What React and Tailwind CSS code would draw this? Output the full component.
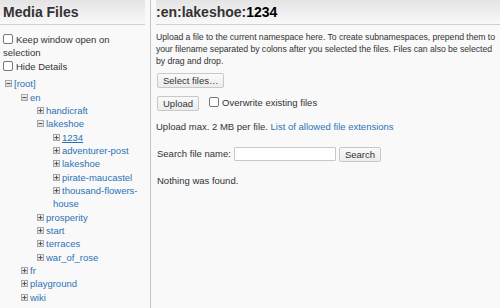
import React from 'react';

const arbol = {
  name: '[root]',
  open: true,
  children: [
    {
      name: 'en',
      open: true,
      children: [
        { name: 'handicraft' },
        {
          name: 'lakeshoe',
          open: true,
          children: [
            { name: '1234', current: true },
            { name: 'adventurer-post' },
            { name: 'lakeshoe' },
            { name: 'pirate-maucastel' },
            { name: 'thousand-flowers-house' },
          ],
        },
        { name: 'prosperity' },
        { name: 'start' },
        { name: 'terraces' },
        { name: 'war_of_rose' },
      ],
    },
    { name: 'fr' },
    { name: 'playground' },
    { name: 'wiki' },
  ],
};

const Toggle = ({ open }) => (
  <svg width="7" height="7" viewBox="0 0 7 7" className="inline-block align-middle mr-[2px] -mt-[2px]">
    <defs>
      <linearGradient id="tg" x1="0" y1="0" x2="0" y2="1">
        <stop offset="0" stopColor="#f6f6f6" />
        <stop offset="1" stopColor="#d4d4d4" />
      </linearGradient>
    </defs>
    <rect x="0.5" y="0.5" width="6" height="6" fill="url(#tg)" stroke="#a8a8a8" />
    <rect x="1.5" y="3" width="4" height="1" fill="#555" />
    {!open && <rect x="3" y="1.5" width="1" height="4" fill="#555" />}
  </svg>
);

function Nodo({ nodo }) {
  return (
    <li>
      <Toggle open={nodo.open} />
      <a className={`text-[#2b73b7] ${nodo.current ? 'underline' : ''}`}>{nodo.name}</a>
      {nodo.children && (
        <ul className="pl-[16px]">
          {nodo.children.map((n, i) => (
            <Nodo key={i} nodo={n} />
          ))}
        </ul>
      )}
    </li>
  );
}

const Casilla = () => (
  <span className="inline-block w-[10px] h-[10px] border border-[#777] rounded-[2px] bg-white align-middle -mt-[2px] mr-[3px]" />
);

const boton =
  'inline-block h-[15px] px-[5px] leading-[13px] border border-[#c8c8c8] rounded-[2px] bg-linear-to-b from-[#fafafa] to-[#ececec] text-[#333]';

export default function App() {
  return (
    <div
      className="w-[500px] h-[308px] flex bg-[#f9f9f9] text-[#333] text-[9.5px] overflow-hidden"
      style={{ fontFamily: '"Liberation Sans", Arial, sans-serif' }}
    >
      <div className="w-[151px] shrink-0 border-r border-[#c4c4c4] pl-[3px] pr-[5px]">
        <div className="h-[25px] border-b border-[#d0d0d0] -ml-[3px] pl-[3px] bg-linear-to-b from-[#e4e4e4] to-[#f9f9f9]">
          <h1 className="text-[14px] font-bold leading-[25px] text-[#333]">Media Files</h1>
        </div>
        <div className="mt-[8px] leading-[13.4px]">
          <div>
            <Casilla />
            Keep window open on
            <br />
            selection
          </div>
          <div>
            <Casilla />
            Hide Details
          </div>
        </div>
        <ul className="mt-[4px] pl-[2px] leading-[13.35px]">
          <Nodo nodo={arbol} />
        </ul>
      </div>

      <div className="flex-1 pl-[5px]">
        <div className="h-[25px] border-b border-[#d0d0d0] bg-linear-to-b from-[#e4e4e4] to-[#f9f9f9]">
          <h1 className="text-[14px] font-bold leading-[25px] text-[#333]">
            :en:lakeshoe:<span className="text-black">1234</span>
          </h1>
        </div>
        <p className="mt-[6px] leading-[12.2px] text-[8.7px] tracking-[-0.05px]">
          Upload a file to the current namespace here. To create subnamespaces, prepend them to your
          filename separated by colons after you selected the files. Files can also be selected by
          drag and drop.
        </p>
        <div className="mt-[5px] ml-[1px]">
          <button className={boton}>Select files…</button>
        </div>
        <div className="mt-[8px] ml-[1px] flex items-center">
          <button className={boton}>Upload</button>
          <label className="ml-[10px] flex items-center">
            <Casilla />
            Overwrite existing files
          </label>
        </div>
        <p className="mt-[9px] leading-[13px]">
          Upload max. 2 MB per file. <a className="text-[#2b73b7]">List of allowed file extensions</a>
        </p>
        <div className="mt-[14px] flex items-center">
          <span className="ml-[1px]">Search file name:</span>
          <input
            type="text"
            className="ml-[3px] w-[102px] h-[14px] border border-[#c8c8c8] bg-white rounded-[1px] outline-none"
          />
          <button className={`${boton} ml-[3px]`}>Search</button>
        </div>
        <p className="mt-[12px] leading-[13px] ml-[1px]">Nothing was found.</p>
      </div>
    </div>
  );
}
